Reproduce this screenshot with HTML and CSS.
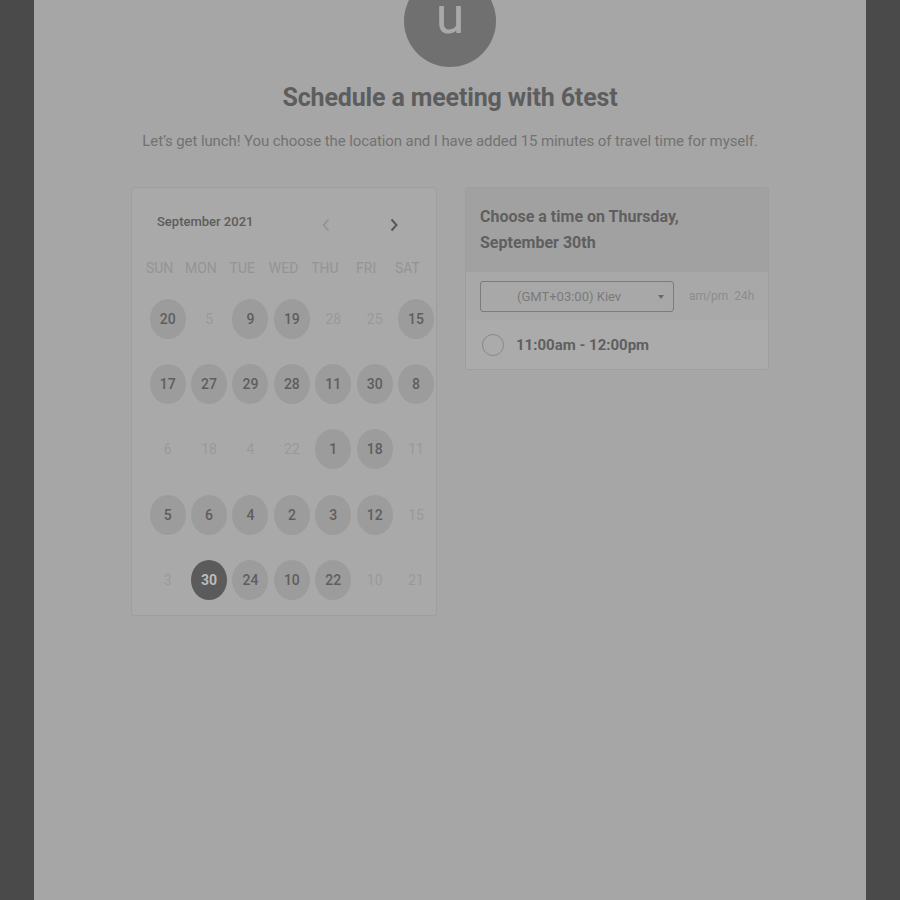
FILE: index.html
```html
<!DOCTYPE html>
<html>
<head>
<meta charset="utf-8">
<link rel="stylesheet" href="styles.css">
</head>
<body>
<div class="panel">
  <div class="avatar"><span>u</span></div>
  <h1 class="title">Schedule a meeting with 6test</h1>
  <p class="subtitle">Let’s get lunch! You choose the location and I have added 15 minutes of travel time for myself.</p>
  <div class="cards">
    <div class="calendar">
      <div class="cal-head">
        <span class="month">September 2021</span>
        <span class="nav prev"><svg width="10" height="14" viewBox="0 0 10 14"><path d="M7.5 1.5 L2.5 7 L7.5 12.5" fill="none" stroke="#8f8f8f" stroke-width="1.3"/></svg></span>
        <span class="nav next"><svg width="10" height="14" viewBox="0 0 10 14"><path d="M2.5 1.5 L7.5 7 L2.5 12.5" fill="none" stroke="#585858" stroke-width="2"/></svg></span>
      </div>
      <div class="weekdays">
        <span>SUN</span><span>MON</span><span>TUE</span><span>WED</span><span>THU</span><span>FRI</span><span>SAT</span>
      </div>
      <div class="days">
        <span class="d on">20</span><span class="d">5</span><span class="d on">9</span><span class="d on">19</span><span class="d">28</span><span class="d">25</span><span class="d on">15</span>
        <span class="d on">17</span><span class="d on">27</span><span class="d on">29</span><span class="d on">28</span><span class="d on">11</span><span class="d on">30</span><span class="d on">8</span>
        <span class="d">6</span><span class="d">18</span><span class="d">4</span><span class="d">22</span><span class="d on">1</span><span class="d on">18</span><span class="d">11</span>
        <span class="d on">5</span><span class="d on">6</span><span class="d on">4</span><span class="d on">2</span><span class="d on">3</span><span class="d on">12</span><span class="d">15</span>
        <span class="d">3</span><span class="d sel">30</span><span class="d on">24</span><span class="d on">10</span><span class="d on">22</span><span class="d">10</span><span class="d">21</span>
      </div>
    </div>
    <div class="times">
      <div class="times-head">Choose a time on Thursday,<br>September 30th</div>
      <div class="tz-row">
        <div class="select">(GMT+03:00) Kiev<span class="caret"></span></div>
        <div class="fmt">am/pm&nbsp; 24h</div>
      </div>
      <div class="slot">
        <span class="radio"></span>
        <span class="slot-text">11:00am - 12:00pm</span>
      </div>
    </div>
  </div>
</div>
</body>
</html>
```
FILE: styles.css
```css
html, body {
  margin: 0;
  padding: 0;
  height: 100%;
  overflow: hidden;
}
body {
  background: #4a4a4a;
  font-family: Roboto, "Liberation Sans", Arial, sans-serif;
}
.panel {
  margin: 0 34px;
  height: 900px;
  background: #a6a6a6;
  display: flex;
  flex-direction: column;
  align-items: center;
}
.avatar {
  margin-top: -25px;
  width: 92px;
  height: 92px;
  border-radius: 50%;
  background: #707070;
  display: flex;
  justify-content: center;
  align-items: center;
}
.avatar span {
  color: #a9a9a9;
  font-size: 52px;
  line-height: 52px;
  margin-top: -10px;
}
.title {
  margin: 16px 0 0;
  font-size: 25px;
  line-height: 30px;
  font-weight: 700;
  color: #5d5d5d;
  letter-spacing: -0.15px;
}
.subtitle {
  margin: 18px 0 0;
  font-size: 15px;
  line-height: 20px;
  color: #727272;
  letter-spacing: -0.1px;
}
.cards {
  margin-top: 36px;
  display: flex;
  gap: 28px;
  align-items: flex-start;
}
.calendar {
  width: 304px;
  height: 427px;
  background: #a9a9a9;
  border: 1px solid #9e9e9e;
  border-radius: 3px;
  overflow: hidden;
}
.cal-head {
  display: flex;
  align-items: center;
  height: 24px;
  padding: 21px 0 0 25px;
}
.month {
  font-size: 13px;
  font-weight: 500;
  color: #5c5c5c;
  width: 160px;
}
.nav {
  display: flex;
  align-items: center;
  margin-top: 7px;
}
.prev { margin-left: 4px; }
.next { margin-left: 58px; }
.weekdays {
  margin-top: 25px;
  padding-left: 7px;
  display: grid;
  grid-template-columns: repeat(7, 41.3px);
  height: 20px;
  line-height: 20px;
  font-size: 14px;
  color: #949494;
  text-align: center;
}
.days {
  margin-top: 8px;
  padding-left: 15px;
  display: grid;
  grid-template-columns: repeat(7, 41.4px);
  grid-auto-rows: 65.4px;
  align-items: center;
  justify-items: center;
}
.d {
  width: 36px;
  height: 40px;
  border-radius: 50%;
  display: flex;
  align-items: center;
  justify-content: center;
  font-size: 14px;
  color: #999999;
}
.d.on {
  background: #9c9c9c;
  color: #5e5e5e;
  font-weight: 500;
}
.d.sel {
  background: #5b5b5b;
  color: #bcbcbc;
  font-weight: 700;
}
.times {
  width: 302px;
  background: #aaaaaa;
  border: 1px solid #9e9e9e;
  border-radius: 3px;
  overflow: hidden;
}
.times-head {
  background: #a1a1a1;
  padding: 16px 15px 16px 14px;
  font-size: 16px;
  line-height: 26px;
  font-weight: 700;
  color: #5f5f5f;
}
.tz-row {
  display: flex;
  align-items: center;
  height: 48px;
  padding-left: 14px;
  background: #a8a8a8;
}
.select {
  box-sizing: border-box;
  width: 194px;
  height: 31px;
  border: 1px solid #7c7c7c;
  border-radius: 3px;
  padding-left: 36px;
  display: flex;
  align-items: center;
  font-size: 13px;
  color: #7a7a7a;
  position: relative;
}
.caret {
  position: absolute;
  right: 9px;
  top: 13px;
  width: 0;
  height: 0;
  border-left: 3.5px solid transparent;
  border-right: 3.5px solid transparent;
  border-top: 4px solid #6a6a6a;
}
.fmt {
  margin-left: 15px;
  font-size: 12px;
  color: #8c8c8c;
}
.slot {
  display: flex;
  align-items: center;
  height: 49px;
  padding-left: 16px;
  background: #ababab;
}
.radio {
  box-sizing: border-box;
  width: 22px;
  height: 22px;
  border-radius: 50%;
  border: 1.5px solid #888888;
}
.slot-text {
  margin-left: 12px;
  font-size: 15px;
  font-weight: 700;
  color: #5f5f5f;
}
```
